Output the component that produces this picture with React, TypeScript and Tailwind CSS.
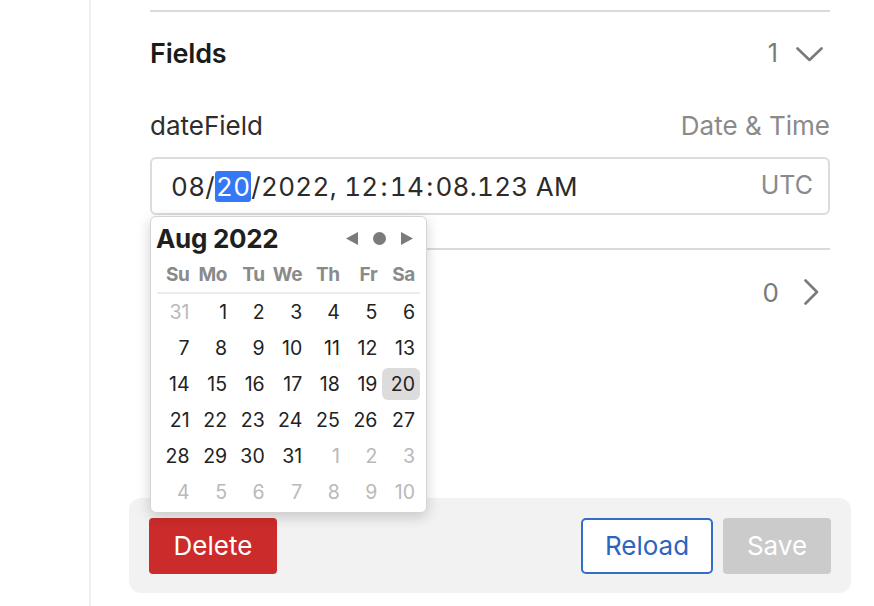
const FONT = { fontFamily: 'Inter, "Noto Sans", sans-serif' }

const DAYS = ['Su', 'Mo', 'Tu', 'We', 'Th', 'Fr', 'Sa']

// [label, muted, selected]
const WEEKS: [string, boolean, boolean][][] = [
  [['31', true, false], ['1', false, false], ['2', false, false], ['3', false, false], ['4', false, false], ['5', false, false], ['6', false, false]],
  [['7', false, false], ['8', false, false], ['9', false, false], ['10', false, false], ['11', false, false], ['12', false, false], ['13', false, false]],
  [['14', false, false], ['15', false, false], ['16', false, false], ['17', false, false], ['18', false, false], ['19', false, false], ['20', false, true]],
  [['21', false, false], ['22', false, false], ['23', false, false], ['24', false, false], ['25', false, false], ['26', false, false], ['27', false, false]],
  [['28', false, false], ['29', false, false], ['30', false, false], ['31', false, false], ['1', true, false], ['2', true, false], ['3', true, false]],
  [['4', true, false], ['5', true, false], ['6', true, false], ['7', true, false], ['8', true, false], ['9', true, false], ['10', true, false]],
]

function CalendarPopup() {
  return (
    <div className="absolute left-0 top-[59px] z-10 w-[277px] rounded-[6px] border border-[#d4d4d4] bg-white px-[4px] pt-[7px] pb-[2px] shadow-[0_4px_14px_rgba(0,0,0,0.18)]">
      <div className="flex h-[28px] items-center justify-between pl-[1px] pr-[9px]">
        <span className="text-[26px] font-bold text-[#1f1f1f] tracking-[-0.3px]">Aug 2022</span>
        <div className="flex items-center gap-[15px]">
          <svg width="12" height="13" viewBox="0 0 12 13"><path d="M12 0 L12 13 L0 6.5 Z" fill="#7b7b7b" /></svg>
          <span className="h-[13px] w-[13px] rounded-full bg-[#7b7b7b]" />
          <svg width="12" height="13" viewBox="0 0 12 13"><path d="M0 0 L0 13 L12 6.5 Z" fill="#7b7b7b" /></svg>
        </div>
      </div>
      <div className="mt-[9px] grid grid-cols-7 px-[2px]">
        {DAYS.map(d => (
          <div key={d} className="h-[28px] pr-[5px] text-right text-[19px] font-bold leading-[28px] tracking-[-0.3px] text-[#8a8a8a]">{d}</div>
        ))}
      </div>
      <div className="mx-[2px] mt-[3px] h-[2px] bg-[#ebebeb]" />
      <div className="grid grid-cols-7 px-[2px]">
        {WEEKS.flat().map(([label, muted, selected], i) => (
          <div key={i} className="flex h-[36px] items-center">
            <div
              className={
                'h-[32px] w-full rounded-[6px] pr-[5px] text-right text-[19.5px] leading-[32px] ' +
                (selected ? 'bg-[#dcdcdc] text-[#222]' : muted ? 'text-[#b9b9b9]' : 'text-[#222]')
              }
            >
              {label}
            </div>
          </div>
        ))}
      </div>
    </div>
  )
}

export default function App() {
  return (
    <div className="flex h-[606px] w-[874px] overflow-hidden bg-white" style={FONT}>
      <div className="w-[89px] shrink-0" />
      <div className="w-[2px] shrink-0 bg-[#efefef]" />
      <div className="flex flex-1 flex-col pl-[59px] pr-[44px]">
        <div className="mt-[10px] h-[2px] bg-[#dadada]" />

        <div className="mt-[26px] flex h-[32px] items-center justify-between">
          <span className="text-[27px] font-semibold tracking-[-0.2px] text-[#1b1b1b]">Fields</span>
          <div className="flex items-center gap-[18px] text-[#7a7a7a]">
            <span className="text-[25px]">1</span>
            <svg width="27" height="15" viewBox="0 0 27 15" className="mr-[7px]">
              <path d="M1.5 1.5 L13.5 13 L25.5 1.5" fill="none" stroke="#7a7a7a" strokeWidth="2.6" strokeLinecap="round" strokeLinejoin="round" />
            </svg>
          </div>
        </div>

        <div className="mt-[41px] flex h-[28px] items-center justify-between">
          <span className="text-[26px] text-[#2e2e2e]">dateField</span>
          <span className="text-[26px] text-[#8a8a8a]">Date &amp; Time</span>
        </div>

        <div className="relative mt-[18px]">
          <div className="flex h-[58px] items-center justify-between rounded-[6px] border-2 border-[#dcdcdc] pl-[19px] pr-[15px]">
            <span className="text-[26px] tabular-nums tracking-[0.3px] text-[#2b2b2b]">
              08/<span className="rounded-[3px] bg-[#3478f6] px-[1px] text-white">20</span>/2022, 12<span className="px-[2px]">:</span>14<span className="px-[2px]">:</span>08.123 AM
            </span>
            <span className="text-[25px] text-[#8a8a8a]">UTC</span>
          </div>
          <CalendarPopup />
        </div>

        <div className="mt-[33px] h-[2px] bg-[#dadada]" />

        <div className="mt-[29px] flex h-[26px] items-center justify-end">
          <span className="text-[26px] text-[#7a7a7a]">0</span>
          <svg width="15" height="26" viewBox="0 0 15 26" className="ml-[25px] mr-[11px]">
            <path d="M1.5 1.5 L13 13 L1.5 24.5" fill="none" stroke="#7a7a7a" strokeWidth="2.6" strokeLinecap="round" strokeLinejoin="round" />
          </svg>
        </div>

        <div className="-mx-[21px] mt-[193px] flex h-[95px] items-center justify-between rounded-[12px] bg-[#f2f2f2] px-[20px]">
          <button className="h-[56px] w-[128px] rounded-[4px] bg-[#cc2b2b] text-[26px] text-white">Delete</button>
          <div className="flex items-center gap-[10px]">
            <button className="h-[56px] w-[132px] rounded-[5px] border-2 border-[#2f6fc6] bg-white text-[26px] text-[#2a66c0]">Reload</button>
            <button className="h-[56px] w-[108px] rounded-[4px] bg-[#cbcbcb] text-[26px] text-white">Save</button>
          </div>
        </div>
      </div>
    </div>
  )
}
